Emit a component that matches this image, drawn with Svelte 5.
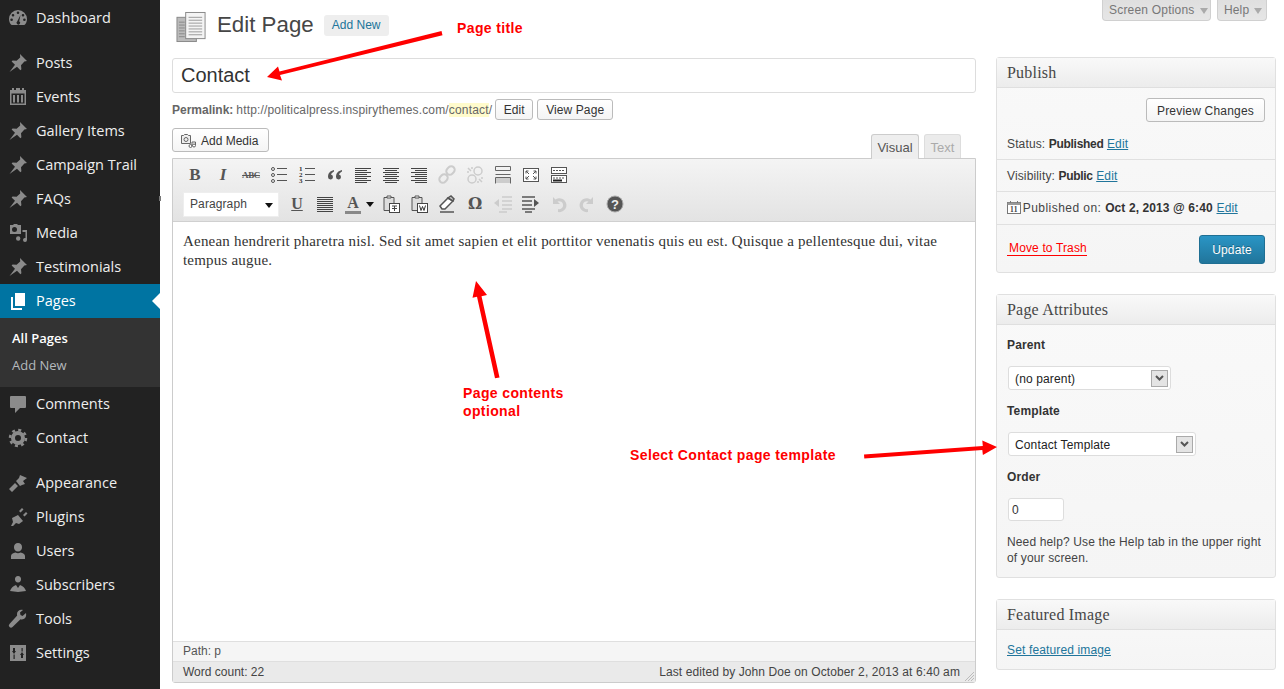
<script>
const P = {
  pin: 'M12 1l7 7-2.600.6-3.400 3.600.4 4-1 1-3.400-3.400L1.500 19l5.500-7.200L3.600 8.400l1-1 4 .4 3.600-3.400z',
  dash: 'M10 2a9 9 0 0 0-9 9c0 2.600 1 4.700 2.600 6h12.800c1.600-1.300 2.600-3.400 2.600-6a9 9 0 0 0-9-9zM10 3.500a1.300 1.300 0 1 1 0 2.600 1.300 1.300 0 0 1 0-2.600zM5 6a1.300 1.300 0 1 1 0 2.600A1.300 1.300 0 0 1 5 6zM15 6a1.300 1.300 0 1 1 0 2.600A1.300 1.300 0 0 1 15 6zM3.600 10.500a1.300 1.300 0 1 1 0 2.600 1.300 1.300 0 0 1 0-2.600zM16.400 10.500a1.300 1.300 0 1 1 0 2.600 1.300 1.300 0 0 1 0-2.600zM12.500 7l-1.300 6.200a1.800 1.800 0 1 1-2 .200z',
  cal: 'M4 1h2v2h2V1h4v2h2V1h2v2h2v15H2V3h2zM3.500 6.500v10h13v-10zM5 8h2v7.500H5zM9 8h2v7.500H9zM13 8h2v7.500h-2z',
  media: 'M2 2h3l1-1h3l1 1h3v9H2zM6.500 4a2.500 2.500 0 1 0 0 5 2.500 2.500 0 0 0 0-5zM14.500 7H19v10a2 2 0 1 1-1.500-2V9h-3zM8 15.500a2.200 2.200 0 0 1 4.400 0 2.200 2.200 0 0 1-4.400 0z',
  bubble: 'M3 2h14a1 1 0 0 1 1 1v10a1 1 0 0 1-1 1h-5l-5 5v-5H3a1 1 0 0 1-1-1V3a1 1 0 0 1 1-1z',
  brush: 'M1 16l6-6 3 3-6 6zM8 8l3-3 1-3 7 3-4 3 2 3-3 1-2 1z',
  plug: 'M3 19l2-4-1-4 6-3 5 6-4 3-3-1-3 3zM11 4l3-3 1.500 1.500-3 3zM15 8l3-3 1.500 1.500-3 3z',
  user: 'M10 2a4 4 0 0 1 4 4.500c0 2-1.500 4-4 4s-4-2-4-4A4 4 0 0 1 10 2zM3 18v-3c0-2 2-3 4.500-3.500 1.500 1 3.500 1 5 0C15 12 17 13 17 15v3z',
  sub: 'M10 1a3 3 0 0 1 3 3.500c0 1.500-1 3-3 3s-3-1.500-3-3A3 3 0 0 1 10 1zM2 16c1-3 3-5 6-6l2 3 2-3c3 1 5 3 6 6l-8 1z',
  wrench: 'M18 4l-3.500 3-2-1-.5-2.500L15 1c-3-1-6 1-6 4 0 1 .2 1.500.2 1.500L1.500 15a2 2 0 0 0 3 3l8-7.800c3 1 6.500-1.200 5.500-6.200z',
  sliders: 'M2 2h16v16H2zM5 5v3H4l2 3 2-3H7V5zM5.500 11.500V16h1.200v-4.500zM13 15v-3h-1l2-3 2 3h-1v3zM13.500 5v3.500h1.200V5z'
};
const items1 = [
  ['Posts','pin'],['Events','cal'],['Gallery Items','pin'],['Campaign Trail','pin'],['FAQs','pin'],['Media','media'],['Testimonials','pin']
];
const items2 = [['Appearance','brush'],['Plugins','plug'],['Users','user'],['Subscribers','sub'],['Tools','wrench'],['Settings','sliders']];
</script>

{#snippet mi(label, d)}
  <a class="mi"><svg class="ic" viewBox="0 0 20 20"><path d={d} fill-rule="evenodd"/></svg><span>{label}</span></a>
{/snippet}

{#snippet lines(arr, x2s, op)}
  <svg class="tb" viewBox="0 0 20 20" style:opacity={op}>
    {#each arr as y, i}<rect x={x2s[i][0]} y={y} width={x2s[i][1]} height="1" fill="#444"/>{/each}
  </svg>
{/snippet}

<div class="wrap">
  <nav class="side">
    {@render mi('Dashboard', P.dash)}
    <div class="sep"></div>
    {#each items1 as [l,k]}{@render mi(l, P[k])}{/each}
    <a class="mi cur">
      <svg class="ic" viewBox="0 0 20 20"><path d="M7 2h10v13H7z" fill="#fff"/><path d="M4 6v12h10" fill="none" stroke="#fff" stroke-width="2"/></svg>
      <span>Pages</span>
    </a>
    <div class="sub"><a class="on">All Pages</a><a>Add New</a></div>
    {@render mi('Comments', P.bubble)}
    <a class="mi">
      <svg class="ic" viewBox="0 0 20 20"><circle cx="10" cy="10" r="5" fill="none" stroke="#8b8b8b" stroke-width="4"/><circle cx="10" cy="10" r="8" fill="none" stroke="#8b8b8b" stroke-width="2.500" stroke-dasharray="3 3.280"/></svg>
      <span>Contact</span>
    </a>
    <div class="sep"></div>
    {#each items2 as [l,k]}{@render mi(l, P[k])}{/each}
  </nav>

  <main class="main">
    <section class="col">
      <header class="head">
        <svg class="pgicon" viewBox="0 0 32 32">
          <rect x="1" y="6" width="20" height="25" fill="#bbb" stroke="#888"/>
          <rect x="10" y="1" width="20" height="27" fill="#f4f4f4" stroke="#888"/>
          <g stroke="#999"><path d="M13 6h14M13 9h14M13 12h14M13 15h14M13 18h14M13 21h14M13 24h14"/></g>
          <g stroke="#888"><path d="M3 11h6M3 14h6M3 17h6M3 20h6M3 23h6M3 26h6"/></g>
        </svg>
        <h1>Edit Page</h1>
        <a class="addnew">Add New</a>
      </header>
      <div class="title">Contact</div>
      <div class="perma">
        <b>Permalink:</b><span class="url">http://politicalpress.inspirythemes.com/<i>contact</i>/</span>
        <a class="btn e1">Edit</a><a class="btn e2">View Page</a>
      </div>
      <div class="tools">
        <a class="btn media">
          <svg class="mic" viewBox="0 0 16 16"><path d="M1.500 2.500h2l1-1h3l1 1h2v8h-9z" fill="#eee" stroke="#666"/><circle cx="6" cy="6.500" r="2" fill="none" stroke="#666"/><circle cx="10.500" cy="13" r="1.500" fill="#fff" stroke="#666"/><circle cx="14" cy="12.500" r="1.500" fill="#fff" stroke="#666"/><path d="M12 13V9h3.500v3" fill="none" stroke="#666"/></svg>
          Add Media
        </a>
        <div class="tabs"><span class="tab act">Visual</span><span class="tab">Text</span></div>
      </div>
      <div class="editor">
        <div class="bar">
          <div class="row r1">
            <span class="tbt b">B</span>
            <span class="tbt it">I</span>
            <span class="tbt abc">ABC</span>
            <svg class="tb" viewBox="0 0 20 20"><g fill="none" stroke="#555"><circle cx="4" cy="4" r="1.500"/><circle cx="4" cy="10" r="1.500"/><circle cx="4" cy="16" r="1.500"/><path d="M8 3.500h10M8 9.500h10M8 15.500h10"/></g></svg>
            <svg class="tb" viewBox="0 0 20 20"><g fill="#333" font-size="7" font-weight="700" font-family="Liberation Serif"><text x="2" y="6">1</text><text x="2" y="12">2</text><text x="2" y="18">3</text></g><path d="M8 3.500h10M8 9.500h10M8 15.500h10" stroke="#555"/></svg>
            <svg class="tb" viewBox="0 0 20 20"><path d="M9 5C5 6 3 8 3 12a2.500 2.500 0 1 0 3-2.500C6.500 8 8 7 9 6.500zM17 5c-4 1-6 3-6 7a2.500 2.500 0 1 0 3-2.500c.5-1.500 2-2.500 3-3z" fill="#555"/></svg>
            {@render lines([3,5,7,9,11,13,15,17],[[2,16],[2,12],[2,16],[2,12],[2,16],[2,12],[2,16],[2,12]],1)}
            {@render lines([3,5,7,9,11,13,15,17],[[2,16],[4,12],[2,16],[4,12],[2,16],[4,12],[2,16],[4,12]],1)}
            {@render lines([3,5,7,9,11,13,15,17],[[2,16],[6,12],[2,16],[6,12],[2,16],[6,12],[2,16],[6,12]],1)}
            <svg class="tb" viewBox="0 0 20 20"><g fill="none" stroke="#ccc" stroke-width="2"><rect x="9" y="2" width="9" height="7" rx="3.500" transform="rotate(-45 13.500 5.500)"/><rect x="2" y="10" width="9" height="7" rx="3.500" transform="rotate(-45 6.500 13.500)"/></g></svg>
            <svg class="tb" viewBox="0 0 20 20"><g fill="none" stroke="#ccc" stroke-width="1.500"><circle cx="13" cy="6" r="4"/><circle cx="7" cy="14" r="4"/><path d="M3 3l3 3M2 7h2M7 2v2M14 14l3 3M16 13h2M13 16v2"/></g></svg>
            <svg class="tb" viewBox="0 0 20 20"><path d="M2.500 1.500h15v4h-15zM2.500 9.500h15M2.500 12.500h15v6" fill="none" stroke="#666"/><path d="M2.500 12.500v6" stroke="#666"/><rect x="3" y="13" width="14" height="5" fill="#ccc"/></svg>
            <svg class="tb" viewBox="0 0 20 20"><rect x="2.500" y="3.500" width="15" height="13" fill="#fff" stroke="#555"/><path d="M5 6l3 3M5 6v2.500M5 6h2.500M15 14l-3-3M15 14v-2.500M15 14h-2.500M15 6l-3 3M15 6v2.500M15 6h-2.500M5 14l3-3M5 14v-2.500M5 14h2.500" fill="none" stroke="#555"/></svg>
            <svg class="tb" viewBox="0 0 20 20"><rect x="2.500" y="2.500" width="15" height="6" fill="#fff" stroke="#555"/><rect x="2.500" y="10.500" width="15" height="7" fill="#fff" stroke="#555"/><path d="M4 5.500h12M4 13h12" stroke="#555" stroke-dasharray="2 1"/><path d="M4 15.500h9" stroke="#222" stroke-width="2"/></svg>
          </div>
          <div class="row r2">
            <div class="fmt"><span>Paragraph</span><i class="caret"></i></div>
            <span class="tbt u">U</span>
            {@render lines([3,5,7,9,11,13,15,17],[[2,16],[2,16],[2,16],[2,16],[2,16],[2,16],[2,16],[2,16]],1)}
            <span class="tbt col-a">A<i></i></span>
            <i class="caret sm"></i>
            <svg class="tb paste" viewBox="0 0 20 20"><path d="M3 3.500h10v13H3z" fill="#ddd" stroke="#555"/><path d="M6 4V2h4v2z" fill="#fff" stroke="#555"/><rect x="8.500" y="9.500" width="10" height="9" fill="#fff" stroke="#444"/><path d="M11 12h5M13.500 12v5M11 14.500h2M14 14.500h2" stroke="#444"/></svg>
            <svg class="tb" viewBox="0 0 20 20"><path d="M3 3.500h10v13H3z" fill="#ddd" stroke="#555"/><path d="M6 4V2h4v2z" fill="#fff" stroke="#555"/><rect x="8.500" y="9.500" width="10" height="9" fill="#fff" stroke="#444"/><path d="M10.500 11.500l1.500 5 1.500-4 1.500 4 1.500-5" fill="none" stroke="#333"/></svg>
            <svg class="tb" viewBox="0 0 20 20"><path d="M3 12l8-8 5 3-8 8H5z" fill="#fff" stroke="#555" stroke-width="1.500"/><path d="M11 4l5 3 1-2-3-3zM3 18h14" stroke="#555" stroke-width="1.500" fill="#ccc"/></svg>
            <span class="tbt om">Ω</span>
            <svg class="tb" viewBox="0 0 20 20"><g stroke="#ccc" stroke-width="1.500"><path d="M9 3h10M9 7h10M9 11h10M9 15h10M6 18h8"/></g><path d="M1 9l5-4v8z" fill="#ccc"/></svg>
            <svg class="tb" viewBox="0 0 20 20"><g stroke="#555" stroke-width="1.500"><path d="M1 3h13M1 7h10M1 11h10M1 15h13M4 18h7"/></g><path d="M18 9l-5-4v8z" fill="#555"/></svg>
            <svg class="tb" viewBox="0 0 20 20"><path d="M4 3v7h7L8.500 7.500A4 4 0 1 1 9 15v3a7 7 0 1 0-2.600-12.600z" fill="#ccc"/></svg>
            <svg class="tb" viewBox="0 0 20 20"><path d="M16 3v7H9l2.500-2.500A4 4 0 1 0 11 15v3a7 7 0 1 1 2.600-12.600z" fill="#ccc"/></svg>
            <svg class="tb" viewBox="0 0 20 20"><circle cx="10" cy="10" r="8" fill="#555" stroke="#aaa"/><text x="10" y="14.500" text-anchor="middle" font-size="13" font-weight="700" font-family="Liberation Sans" fill="#eee">?</text></svg>
          </div>
        </div>
        <div class="content">Aenean hendrerit pharetra nisl. Sed sit amet sapien et elit porttitor venenatis quis eu est. Quisque a pellentesque dui, vitae tempus augue.</div>
        <div class="path">Path: p</div>
        <div class="count">
          <span>Word count: 22</span><span class="edited">Last edited by John Doe on October 2, 2013 at 6:40 am</span>
          <svg class="grip" viewBox="0 0 12 12"><path d="M11 2L2 11M11 5l-6 6M11 8l-3 3" stroke="#bbb"/></svg>
        </div>
      </div>
    </section>

    <aside class="rail">
      <div class="meta"><a class="mt so">Screen Options<i></i></a><a class="mt">Help<i></i></a></div>

      <div class="box pub">
        <h3>Publish</h3>
        <div class="prev"><a class="btn pv">Preview Changes</a></div>
        <div class="ln">Status: <b>Published</b> <u>Edit</u></div>
        <div class="ln">Visibility: <b>Public</b> <u>Edit</u></div>
        <div class="ln dt">
          <svg class="cal" viewBox="0 0 14 14"><rect x=".5" y="2.500" width="13" height="11" fill="#fff" stroke="#777"/><path d="M.5 2.500h13v2.500H.5z" fill="#999"/><path d="M3.500 1v2M10.500 1v2" stroke="#777"/><text x="7" y="12" text-anchor="middle" font-size="7.500" font-weight="700" font-family="Liberation Serif" fill="#444">11</text></svg>
          Published on: <b>Oct 2, 2013 @ 6:40</b> <u>Edit</u>
        </div>
        <div class="act-row"><a class="trash">Move to Trash</a><a class="update">Update</a></div>
      </div>

      <div class="box attr">
        <h3>Page Attributes</h3>
        <div class="body">
          <div class="lab first">Parent</div>
          <div class="sel w1"><span>(no parent)</span><i><svg viewBox="0 0 9 6"><path d="M1 1l3.500 3.500L8 1" fill="none" stroke="#555" stroke-width="2"/></svg></i></div>
          <div class="lab">Template</div>
          <div class="sel w2"><span>Contact Template</span><i><svg viewBox="0 0 9 6"><path d="M1 1l3.500 3.500L8 1" fill="none" stroke="#555" stroke-width="2"/></svg></i></div>
          <div class="lab">Order</div>
          <div class="ord">0</div>
          <p>Need help? Use the Help tab in the upper right of your screen.</p>
        </div>
      </div>

      <div class="box feat">
        <h3>Featured Image</h3>
        <div class="fi"><u>Set featured image</u></div>
      </div>
    </aside>
  </main>

  <svg class="notes" viewBox="0 0 1284 689">
    <g fill="#f00">
      <path d="M441.500 31l1 4.200L280 75l2 5.500-15-3.500 11-10.500 1.500 5z"/>
      <path d="M499.500 377.500l-4.500.8-18-81.600-4.500 1L476 281l11 14-5.500 1.200z"/>
      <path d="M864 454.500l.3 4 118-8.500.6 5L997 447l-14.700-6.500.5 5.500z"/>
    </g>
  </svg>
  <span class="note n1">Page title</span>
  <span class="note n2">Page contents<br/>optional</span>
  <span class="note n3">Select Contact page template</span>
</div>

<style>
:global(body){margin:0;background:#fff;overflow:hidden}
.wrap{position:relative;display:flex;width:1284px;height:689px;overflow:hidden;font:12px "Liberation Sans",Arial,sans-serif;color:#333}
a{text-decoration:none;cursor:default}

.side{position:relative;width:160px;height:689px;flex:none;background:#222;padding-top:1px;box-sizing:border-box;font:14.5px "Open Sans",sans-serif;color:#eee}
.side::after{content:"";position:absolute;left:159px;top:196px;width:2px;height:5px;background:#777}
.mi{display:flex;align-items:center;height:34px;position:relative}
.mi span{position:absolute;left:36px;top:7px;line-height:20px}
.ic{width:20px;height:20px;margin-left:8px;fill:#8b8b8b}
.sep{height:11px}
.cur{background:#0074a2;color:#fff}
.cur::after{content:"";position:absolute;right:0;top:9px;border:8px solid transparent;border-left:0;border-right-color:#fff}
.sub{height:69px;background:#333;box-sizing:border-box;padding-top:7px;font-size:13px}
.sub a{display:block;height:27px;line-height:27px;padding-left:12px;color:#b4b9be}
.sub a.on{color:#fff;font-weight:600}

.main{flex:1;display:flex;padding-left:12px;gap:20px}
.col{width:804px;flex:none}
.head{height:58px;display:flex;align-items:flex-start;position:relative}
.pgicon{width:31px;height:32px;margin:11px 0 0 4px}
h1{font:400 22.300px/28px "Liberation Sans",sans-serif;color:#464646;margin:11px 0 0 10px}
.addnew{margin:15px 0 0 10px;width:65px;height:21px;background:#eee;border-radius:3px;text-align:center;line-height:21px;color:#21759b;font-size:12px}
.title{height:35px;box-sizing:border-box;border:1px solid #ddd;border-radius:3px;font-size:20px;line-height:33px;padding-left:8px;color:#333;background:#fff}
.perma{height:35px;display:flex;align-items:flex-start;color:#666;font-size:12px;padding-top:6px;box-sizing:border-box;line-height:22px}
.perma b{color:#666}
.url{margin-left:3px;letter-spacing:.16px}
.perma i{font-style:normal;background:#fffbcc}
.btn{display:block;box-sizing:border-box;border:1px solid #bbb;border-radius:3px;background:linear-gradient(#fff,#f4f4f4);color:#333;font-size:12px;text-align:center}
.e1{width:38px;height:21px;line-height:20px;margin-left:3px}
.e2{width:76px;height:21px;line-height:20px;margin-left:4px;letter-spacing:.1px}
.tools{height:30px;display:flex;justify-content:space-between;align-items:flex-start}
.media{width:97px;height:24px;line-height:22px;display:flex;align-items:center;padding:1px 0 0 7px;gap:5px}
.mic{width:16px;height:16px}
.tabs{display:flex;gap:5px;margin:6px 15px 0 0;align-items:flex-start}
.tab{height:24px;line-height:25px;padding:0 5px;width:37px;box-sizing:border-box;text-align:center;border:1px solid #ddd;border-bottom:0;background:#ebebeb;color:#aaa;font-size:13px;border-radius:3px 3px 0 0}
.tab.act{width:48px;background:#eee;color:#555;height:25px;border-color:#ccc;position:relative;z-index:1}
.editor{height:525px;box-sizing:border-box;border:1px solid #ccc;border-radius:0 0 3px 3px;display:flex;flex-direction:column}
.bar{height:63px;flex:none;box-sizing:border-box;background:linear-gradient(#f4f4f4,#e3e3e3);border-bottom:1px solid #d0d0d0;padding-top:6px}
.row{display:flex;align-items:center;padding-left:12px;gap:8px;height:20px}
.r2{margin-top:9px;padding-left:10px;height:20px}
.tb{width:20px;height:20px;flex:none}
.tbt{width:20px;height:20px;flex:none;text-align:center;line-height:20px;color:#555;font-family:"Liberation Serif",serif}
.b{font-weight:700;font-size:17px}
.it{font-style:italic;font-weight:700;font-size:17px}
.abc{font-size:9px;font-weight:700;text-decoration:line-through;letter-spacing:-.4px}
.u{font-weight:700;font-size:16px;text-decoration:underline}
.om{font-weight:700;font-size:16px;font-family:"DejaVu Serif",serif}
.col-a{font-weight:700;font-size:16px;position:relative;line-height:17px}
.col-a i{position:absolute;left:2px;right:2px;bottom:0;height:3px;background:#888}
.fmt{width:96px;height:25px;box-sizing:border-box;background:#fff;border:1px solid #eee;position:relative;flex:none;padding-left:6px;line-height:23px;color:#444;font-size:12px;letter-spacing:.1px}
.caret{position:absolute;right:5px;top:10px;border:4px solid transparent;border-bottom:0;border-top:5px solid #111;width:0;height:0}
.caret.sm{position:static;flex:none;margin:0 2px 0 -5px}
.paste{margin-left:-3px}
.content{flex:1;background:#fff;font:15px/19px "Liberation Serif",serif;color:#333;padding:10px 10px;letter-spacing:.2px}
.path{height:20px;flex:none;box-sizing:border-box;background:#f5f5f5;border-top:1px solid #dfdfdf;padding-left:10px;line-height:19px;font-size:12px;color:#555}
.count{height:21px;flex:none;box-sizing:border-box;background:#eaeaea;border-top:1px solid #dfdfdf;padding:0 15px 0 10px;line-height:20px;color:#444;display:flex;justify-content:space-between;position:relative;font-size:12px}
.edited{letter-spacing:.1px}
.grip{position:absolute;right:0;bottom:0;width:12px;height:12px}

.rail{width:280px;flex:none;letter-spacing:.14px}
.meta{height:57px;display:flex;justify-content:flex-end;gap:6px;padding-right:9px;box-sizing:border-box}
.mt{width:50px;height:21px;box-sizing:border-box;border:1px solid #d0d0d0;border-top:0;border-radius:0 0 4px 4px;background:linear-gradient(#dfdfdf,#e6e6e6);color:#777;padding:0 6px;font-size:12px;display:flex;gap:5px;align-items:center;white-space:nowrap;justify-content:flex-start}
.mt.so{width:109px;letter-spacing:.2px}
.mt i{width:0;height:0;border:4px solid transparent;border-bottom:0;border-top:6px solid #aaa;margin-top:2px}
.box{box-sizing:border-box;border:1px solid #e0e0e0;border-radius:3px;background:linear-gradient(#f9f9f9,#f5f5f5);margin-bottom:21px}
.box h3{margin:0;height:30px;box-sizing:border-box;font:400 16px/30px "Liberation Serif",serif;letter-spacing:.2px;color:#464646;padding-left:10px;background:linear-gradient(#f9f9f9,#ececec);border-bottom:1px solid #dfdfdf}
.pub{height:216px}
.prev{height:40px;display:flex;justify-content:flex-end;padding:10px 10px 0 0;box-sizing:border-box}
.pv{width:119px;height:24px;line-height:24px;letter-spacing:.2px}
.ln{height:32px;line-height:33px;padding-left:10px;border-bottom:1px solid #e0e0e0;box-sizing:border-box;color:#444}
.ln b{color:#333;letter-spacing:-.3px}
.ln u{color:#21759b}
.dt{height:33px;letter-spacing:.45px}
.dt b{letter-spacing:.1px}
.dt u{letter-spacing:.14px}
.cal{width:14px;height:14px;margin:0 -2px -2px 0}
.act-row{display:flex;justify-content:space-between;padding:10px 10px 0 10px}
.trash{color:#f00;border-bottom:1px solid #f00;width:78px;height:20px;line-height:26px;padding-left:2px}
.update{width:66px;height:29px;box-sizing:border-box;border:1px solid #1f6f93;border-radius:3px;background:linear-gradient(#2a95c5,#21759b);color:#fff;text-align:center;line-height:28px;font-size:12px;text-shadow:0 -1px 0 rgba(0,0,0,.3)}
.attr{height:284px}
.body{padding:0 10px}
.lab{font-weight:700;height:36px;padding-top:14px;line-height:14px;box-sizing:border-box;color:#333}
.lab.first{height:35px;padding-top:13px}
.sel{height:24px;box-sizing:border-box;border:1px solid #ddd;border-radius:3px;background:#fff;display:flex;justify-content:space-between;align-items:center;padding:0 2px 0 6px;margin:6px 0 0 1px;color:#222;font-size:12px}
.sel span{padding-top:1px}
.sel i{width:17px;height:17px;box-sizing:border-box;border:1px solid #aaa;background:#e4e4e4;display:flex;align-items:center;justify-content:center}
.sel svg{width:9px;height:6px}
.w1{width:163px}
.w2{width:188px}
.ord{width:56px;height:23px;box-sizing:border-box;border:1px solid #ddd;border-radius:3px;background:#fff;margin:6px 0 0 1px;padding-left:3px;line-height:22px;color:#333}
p{margin:13px 0 0;line-height:16px;color:#444}
.feat{height:71px}
.fi{padding:13px 10px 0;color:#21759b}
.notes{position:absolute;left:0;top:0;width:1284px;height:689px;pointer-events:none}
.note{position:absolute;color:#f00;font:700 14px/18px "Liberation Sans",sans-serif;letter-spacing:.38px}
.n1{left:457px;top:19px}
.n2{left:463px;top:384px}
.n3{left:630px;top:446px}
</style>
